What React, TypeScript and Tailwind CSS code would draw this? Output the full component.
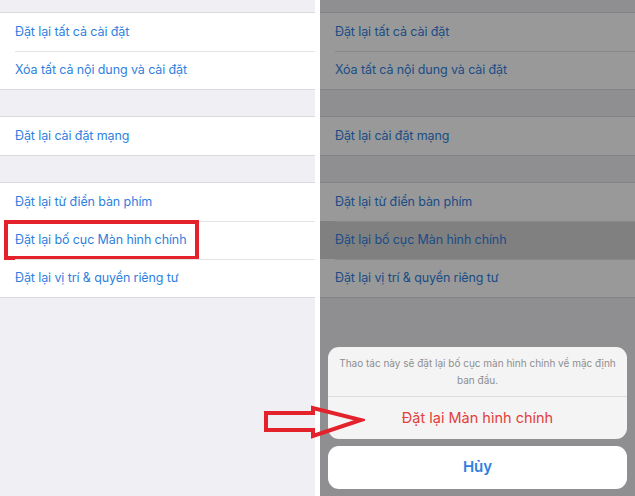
import React from 'react';

type Row = { label: string; id: string };

const groups: Row[][] = [
  [
    { id: 'all', label: 'Đặt lại tất cả cài đặt' },
    { id: 'erase', label: 'Xóa tất cả nội dung và cài đặt' },
  ],
  [{ id: 'net', label: 'Đặt lại cài đặt mạng' }],
  [
    { id: 'kbd', label: 'Đặt lại từ điển bàn phím' },
    { id: 'home', label: 'Đặt lại bố cục Màn hình chính' },
    { id: 'loc', label: 'Đặt lại vị trí & quyền riêng tư' },
  ],
];

const SettingsList: React.FC<{ marked?: boolean; pressed?: boolean }> = ({ marked, pressed }) => {
  return (
    <div className="flex flex-col pt-[12px] gap-[26px]">
      {groups.map((rows, gi) => (
        <div key={gi} className="bg-white border-y border-[#d9d9de]">
          {rows.map((row, ri) => (
            <div
              key={row.id}
              className={`relative h-[38px] flex items-center pl-[15px] ${
                pressed && row.id === 'home' ? 'bg-[#d6d6d6]' : ''
              }`}
            >
              {ri > 0 && <div className="absolute top-0 left-[15px] right-0 h-px bg-[#e3e3e6]" />}
              <span className="text-[12.5px] text-[#2f7fe0] tracking-[-0.1px]">{row.label}</span>
              {marked && row.id === 'home' && (
                <div className="absolute left-[4px] top-[-1px] w-[195px] h-[40px] border-[4px] border-[#e4222b]" />
              )}
            </div>
          ))}
        </div>
      ))}
    </div>
  );
};

const App: React.FC = () => {
  return (
    <div
      className="relative w-[635px] h-[496px] flex bg-white overflow-hidden"
      style={{ fontFamily: 'Inter, "Noto Sans", sans-serif' }}
    >
      <div className="w-[315px] h-full bg-[#efeff4]">
        <SettingsList marked />
      </div>
      <div className="w-[5px] bg-white" />
      <div className="relative w-[315px] h-full bg-[#efeff4]">
        <SettingsList pressed />
        <div className="absolute inset-0 bg-black/40" />
        <div className="absolute left-[8px] right-[8px] bottom-[7px] flex flex-col gap-[7px]">
          <div className="rounded-[11px] bg-[#f4f4f4] overflow-hidden">
            <p className="px-[10px] pt-[8px] pb-[7px] text-center text-[10px] leading-[17px] text-[#8e8e8e]">
              Thao tác này sẽ đặt lại bố cục màn hình chính về mặc định ban đầu.
            </p>
            <div className="h-px bg-[#dcdcdc]" />
            <div className="h-[42px] flex items-center justify-center text-[14.5px] text-[#e2403b]">
              Đặt lại Màn hình chính
            </div>
          </div>
          <div className="h-[43px] rounded-[11px] bg-white flex items-center justify-center text-[15px] font-semibold text-[#2f7fe0]">
            Hủy
          </div>
        </div>
      </div>
      <svg className="absolute left-[263px] top-[405px]" width="102" height="35" viewBox="0 0 102 35">
        <path
          d="M3 8 H50 V3 L98 15 L50 31 V25 H3 Z"
          fill="none"
          stroke="#e4222b"
          strokeWidth="4"
          strokeLinejoin="miter"
        />
      </svg>
    </div>
  );
};

export default App;
